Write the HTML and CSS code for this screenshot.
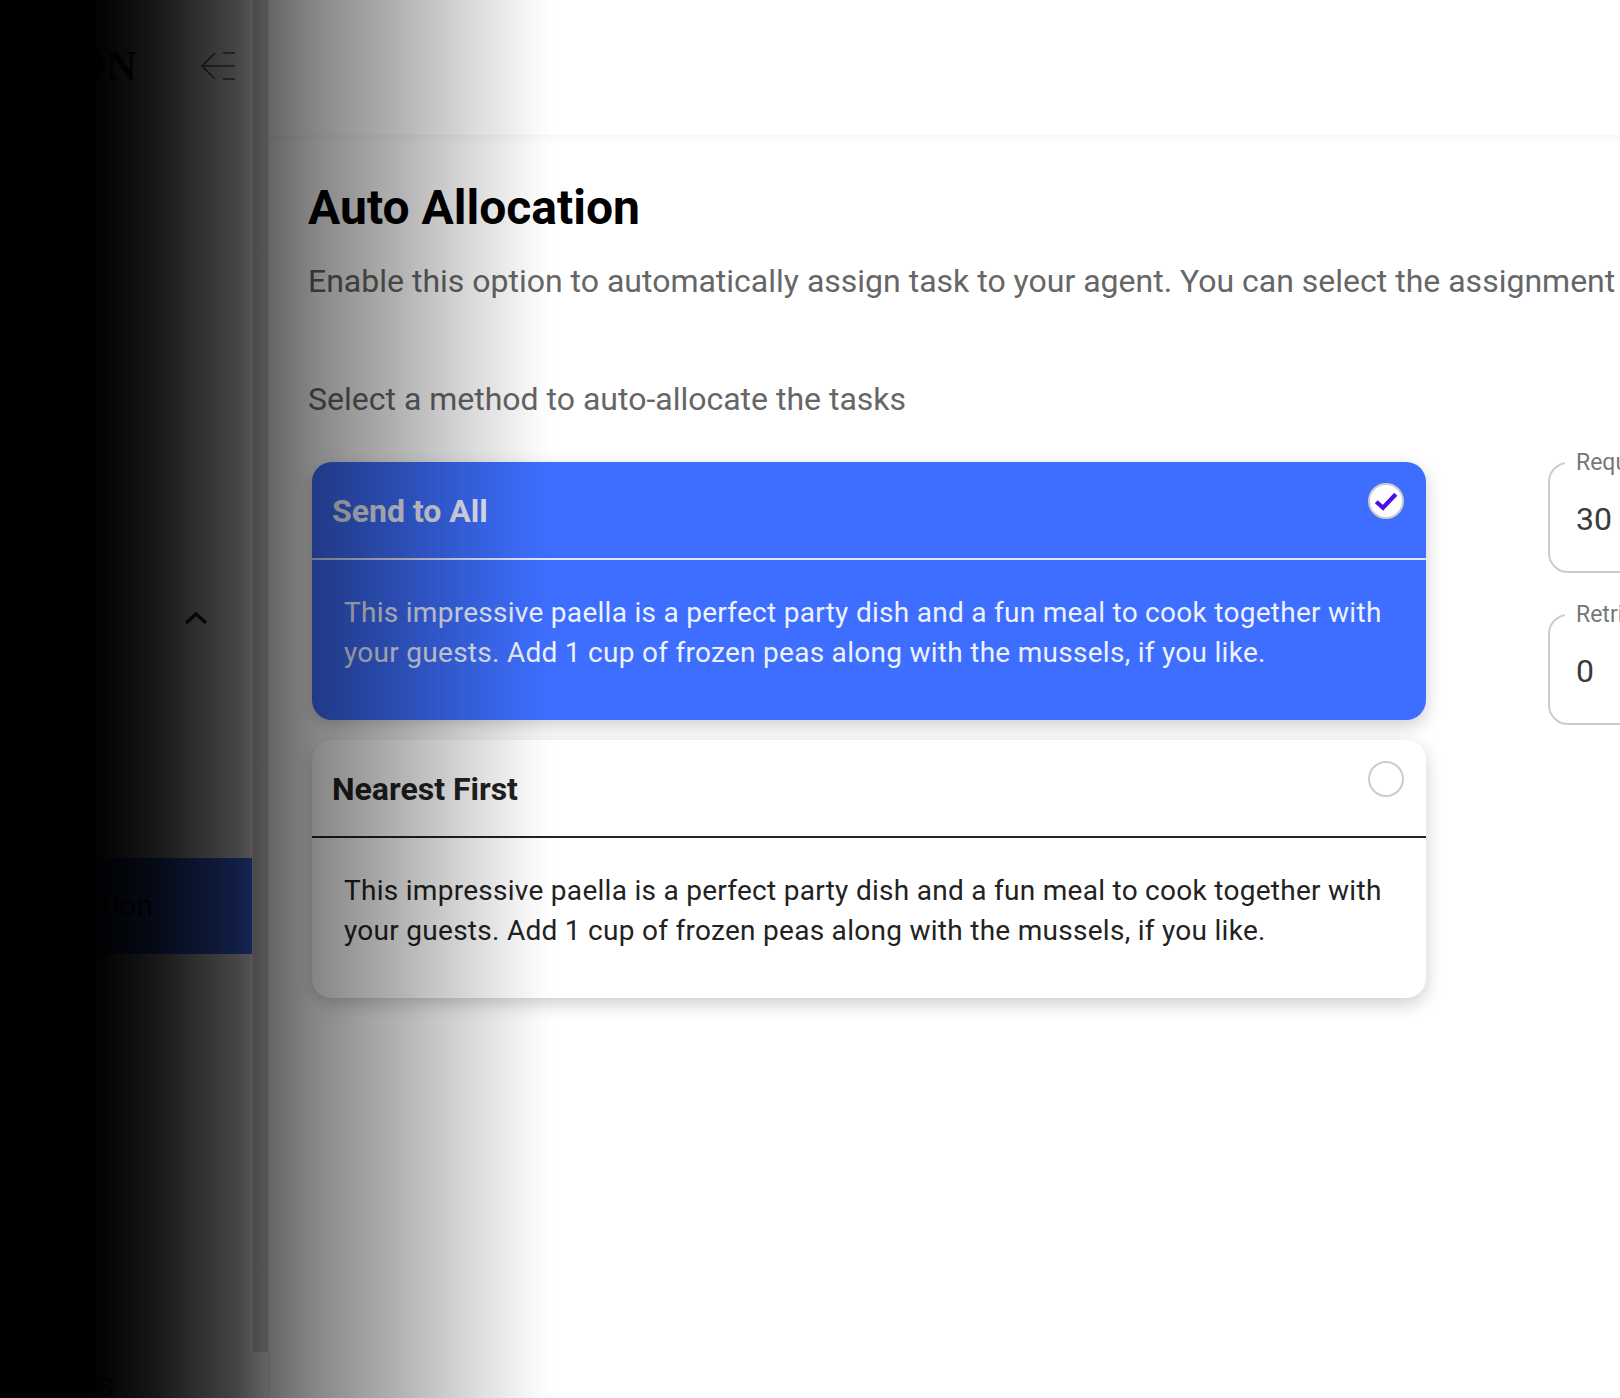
FILE: index.html
```html
<!DOCTYPE html>
<html lang="en">
<head>
<meta charset="utf-8">
<title>Auto Allocation</title>
<link rel="stylesheet" href="styles.css">
</head>
<body>
<div class="app">
  <aside class="sidebar">
    <div class="side-scroll">
      <div class="brand">
        <span class="logo">ICON</span>
        <svg class="collapse" viewBox="0 0 36 30" fill="none" stroke="#666" stroke-width="1.6">
          <path d="M15 2 2 15l13 13M2 15h33M23 2h12M23 28h12"/>
        </svg>
      </div>
      <div class="nav-group">
        <svg class="chevron" viewBox="0 0 24 14" fill="none" stroke="#222" stroke-width="3.5">
          <path d="M2 12 12 3l10 9"/>
        </svg>
      </div>
      <div class="nav-item">Allocation</div>
    </div>
    <div class="track"></div>
    <div class="side-foot">TOOLS</div>
  </aside>
  <main class="main">
    <header class="topbar"></header>
    <section class="content">
      <h1 class="title">Auto Allocation</h1>
      <p class="lead">Enable this option to automatically assign task to your agent. You can select the assignment method</p>
      <p class="prompt">Select a method to auto-allocate the tasks</p>
      <div class="columns">
        <div class="cards">
          <article class="card card-on">
            <div class="card-head">
              <h2 class="card-title">Send to All</h2>
              <span class="tick">
                <svg viewBox="0 0 20 20" fill="none" stroke="#4a10e8" stroke-width="2.8">
                  <path d="M3.5 10.5 8 14.5 16.5 5.5"/>
                </svg>
              </span>
            </div>
            <p class="card-text">This impressive paella is a perfect party dish and a fun meal to cook together with your guests. Add 1 cup of frozen peas along with the mussels, if you like.</p>
          </article>
          <article class="card">
            <div class="card-head">
              <h2 class="card-title">Nearest First</h2>
              <span class="tick"></span>
            </div>
            <p class="card-text">This impressive paella is a perfect party dish and a fun meal to cook together with your guests. Add 1 cup of frozen peas along with the mussels, if you like.</p>
          </article>
        </div>
        <div class="fields">
          <fieldset class="field"><legend>Request Time (sec)</legend><span class="value">30</span></fieldset>
          <fieldset class="field"><legend>Retries</legend><span class="value">0</span></fieldset>
        </div>
      </div>
    </section>
  </main>
  <div class="shade"></div>
</div>
</body>
</html>
```
FILE: styles.css
```css
* { box-sizing: border-box; }
html, body { margin: 0; height: 100%; overflow: hidden; background: #fff; }
body { font-family: Roboto, "Liberation Sans", sans-serif; }

.app { position: relative; display: flex; width: 1620px; height: 1398px; overflow: hidden; }

.sidebar { position: relative; flex: 0 0 269px; height: 1398px; border-right: 1px solid #e6e6e6; display: flex; flex-wrap: wrap; align-content: flex-start; }
.side-scroll { width: 253px; height: 1352px; }
.track { width: 15px; height: 1352px; background: #dcdcdc; }
.side-foot { width: 100%; padding: 20px 0 0 26px; font-size: 28px; line-height: 32px; font-weight: 500; color: #222; white-space: nowrap; }

.brand { height: 135px; display: flex; align-items: center; justify-content: space-between; padding: 0 17px 4px 27px; }
.logo { font-family: "Liberation Serif", serif; font-weight: 700; font-size: 42px; color: #0a1c55; }
.collapse { width: 36px; height: 30px; margin-top: 1px; }

.nav-group { height: 723px; padding: 476px 0 0 184px; }
.chevron { display: block; width: 24px; height: 14px; }

.nav-item { height: 96px; margin-right: 1px; background: #3d6eff; color: #111; font-size: 30px; line-height: 96px; padding-left: 19px; white-space: nowrap; }

.main { flex: 1 1 0; min-width: 0; }
.topbar { height: 135px; box-shadow: 0 4px 6px rgba(228, 232, 248, .4); }
.content { padding: 46px 0 0 39px; }
.title { margin: 0; font-size: 48px; line-height: 54px; font-weight: 700; color: #000; white-space: nowrap; }
.lead { margin: 26px 0 0; font-size: 32px; line-height: 40px; color: #666; white-space: nowrap; }
.prompt { margin: 78px 0 0; font-size: 32px; line-height: 40px; color: #666; white-space: nowrap; }

.columns { display: flex; gap: 122px; margin-top: 43px; padding-left: 4px; }
.cards { flex: 0 0 1114px; display: flex; flex-direction: column; gap: 20px; }

.card { height: 258px; border-radius: 20px; background: #fff; color: #222; box-shadow: 0 6px 18px rgba(0, 0, 0, .2); }
.card-on { background: #3d6eff; color: #eef2ff; }
.card-head { position: relative; height: 98px; padding: 1px 20px 0; display: flex; align-items: center; border-bottom: 2px solid #222; }
.card-on .card-head { border-bottom-color: #dfe7ff; }
.card-title { margin: 0; font-size: 32px; font-weight: 700; line-height: 40px; }
.card-text { margin: 33px 0 0; padding: 0 32px; font-size: 28px; letter-spacing: .28px; line-height: 40px; }

.tick { position: absolute; top: 21px; right: 22px; width: 36px; height: 36px; border-radius: 50%; border: 2px solid #ccc; background: #fff; display: flex; align-items: center; justify-content: center; }
.tick svg { width: 30px; height: 30px; flex: none; }

.fields { flex: 0 0 300px; display: flex; flex-direction: column; gap: 29px; margin-top: -12px; }
.field { margin: 0; height: 123px; padding: 0 0 0 26px; border: 2px solid #ccc; border-radius: 20px; min-width: 0; }
.field legend { padding: 0 0 0 11px; margin-left: -11px; font-size: 23px; line-height: 26px; color: #777; white-space: nowrap; }
.value { display: block; margin-top: 23px; font-size: 32px; line-height: 40px; color: #3a3a3a; }

.shade { position: absolute; inset: 0 auto 0 0; width: 560px; pointer-events: none;
  background: linear-gradient(to right,
    rgba(0,0,0,1) 0, rgba(0,0,0,1) 90px, rgba(0,0,0,.975) 110px, rgba(0,0,0,.905) 158px,
    rgba(0,0,0,.73) 237px, rgba(0,0,0,.6) 270px, rgba(0,0,0,.47) 316px, rgba(0,0,0,.31) 395px,
    rgba(0,0,0,.14) 474px, rgba(0,0,0,.015) 540px, rgba(0,0,0,0) 555px); }
```
